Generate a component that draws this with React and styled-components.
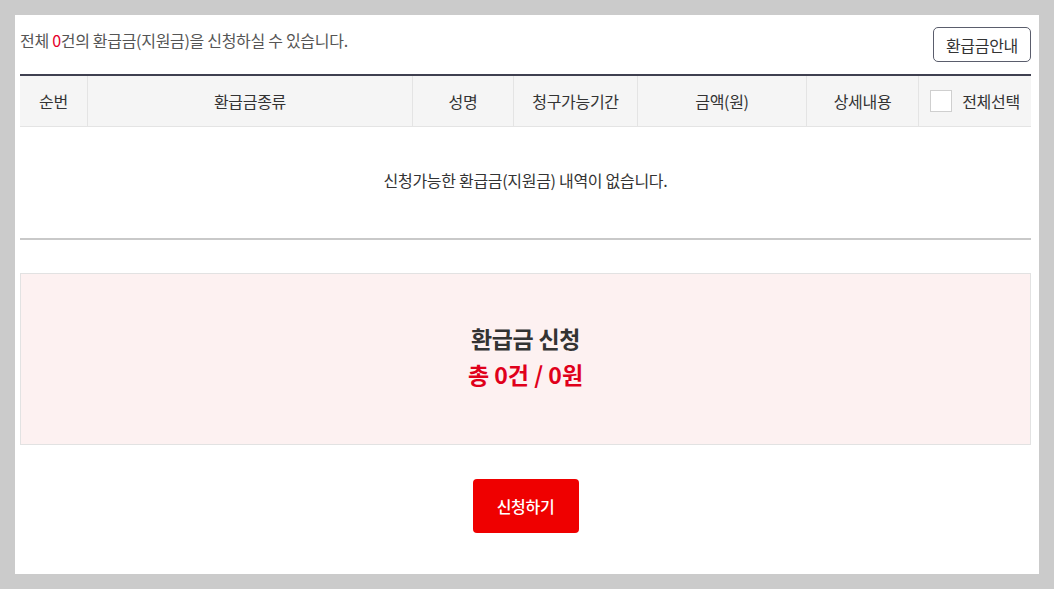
import React from 'react';
import styled, { createGlobalStyle } from 'styled-components';

const GlobalStyle = createGlobalStyle`
    html, body {
        margin: 0;
        padding: 0;
        background: #cbcbcb;
    }

    body {
        font-family: "Noto Sans CJK KR", "Noto Sans", sans-serif;
        color: #333;
    }
`;

const columns = [
    { label: '순번', width: 67 },
    { label: '환급금종류', width: 325 },
    { label: '성명', width: 101 },
    { label: '청구가능기간', width: 124 },
    { label: '금액(원)', width: 169 },
    { label: '상세내용', width: 112 },
];

const Page = styled.div`
    padding: 15px;
    height: 589px;
    box-sizing: border-box;
`;

const Panel = styled.div`
    background: #fff;
    height: 559px;
    box-sizing: border-box;
    padding: 12px 8px 0 5px;
`;

const TopBar = styled.div`
    display: flex;
    justify-content: space-between;
    align-items: flex-start;
    height: 47px;

    p {
        margin: 0;
        font-size: 16px;
        line-height: 26px;
        color: #555;
        letter-spacing: -0.3px;
    }

    em {
        font-style: normal;
        color: #e5002b;
    }
`;

const GuideButton = styled.button`
    height: 35px;
    padding: 0 12px;
    border: 1px solid #5a5d6c;
    border-radius: 5px;
    background: #fff;
    font-family: inherit;
    font-size: 16px;
    color: #333;
    letter-spacing: -0.3px;
`;

const Table = styled.div`
    border-top: 2px solid #3f4050;
`;

const HeadRow = styled.div`
    display: flex;
    height: 50px;
    background: #f5f5f5;
    border-bottom: 1px solid #e4e4e4;
`;

const HeadCell = styled.div`
    width: ${(p) => p.$w}px;
    flex: ${(p) => (p.$grow ? 1 : 'none')};
    display: flex;
    align-items: center;
    justify-content: center;
    gap: 10px;
    font-size: 16px;
    color: #333;
    letter-spacing: -0.3px;
    box-sizing: border-box;
    border-left: ${(p) => (p.$first ? 'none' : '1px solid #e4e4e4')};
`;

const Check = styled.span`
    width: 20px;
    height: 20px;
    border: 1px solid #cfcfcf;
    background: #fff;
`;

const EmptyRow = styled.div`
    height: 113px;
    display: flex;
    align-items: center;
    justify-content: center;
    font-size: 16px;
    color: #333;
    letter-spacing: -0.3px;
    border-bottom: 2px solid #c9c9c9;
    box-sizing: border-box;
    padding-bottom: 6px;
`;

const Summary = styled.div`
    margin-top: 33px;
    height: 172px;
    box-sizing: border-box;
    border: 1px solid #e2e2e2;
    background: #fdf1f1;
    display: flex;
    flex-direction: column;
    align-items: center;
    justify-content: center;
    padding-bottom: 6px;

    h2 {
        margin: 0;
        font-size: 23px;
        line-height: 36px;
        font-weight: 700;
        color: #333;
        letter-spacing: -0.3px;
    }

    strong {
        font-size: 23px;
        line-height: 36px;
        color: #e0001b;
        letter-spacing: 0;
    }
`;

const Actions = styled.div`
    display: flex;
    justify-content: center;
    margin-top: 34px;
`;

const ApplyButton = styled.button`
    width: 106px;
    height: 54px;
    border: none;
    border-radius: 4px;
    background: #ef0000;
    color: #fff;
    font-family: inherit;
    font-size: 16px;
    font-weight: 500;
    letter-spacing: -0.3px;
`;

const App = () => {
    return (
        <Page>
            <GlobalStyle />
            <Panel>
                <TopBar>
                    <p>
                        전체 <em>0</em>건의 환급금(지원금)을 신청하실 수 있습니다.
                    </p>
                    <GuideButton>환급금안내</GuideButton>
                </TopBar>
                <Table>
                    <HeadRow>
                        {columns.map((c, i) => (
                            <HeadCell key={c.label} $w={c.width} $first={i === 0}>
                                {c.label}
                            </HeadCell>
                        ))}
                        <HeadCell $grow>
                            <Check />
                            전체선택
                        </HeadCell>
                    </HeadRow>
                    <EmptyRow>신청가능한 환급금(지원금) 내역이 없습니다.</EmptyRow>
                </Table>
                <Summary>
                    <h2>환급금 신청</h2>
                    <strong>총 0건 / 0원</strong>
                </Summary>
                <Actions>
                    <ApplyButton>신청하기</ApplyButton>
                </Actions>
            </Panel>
        </Page>
    );
};

export default App;
